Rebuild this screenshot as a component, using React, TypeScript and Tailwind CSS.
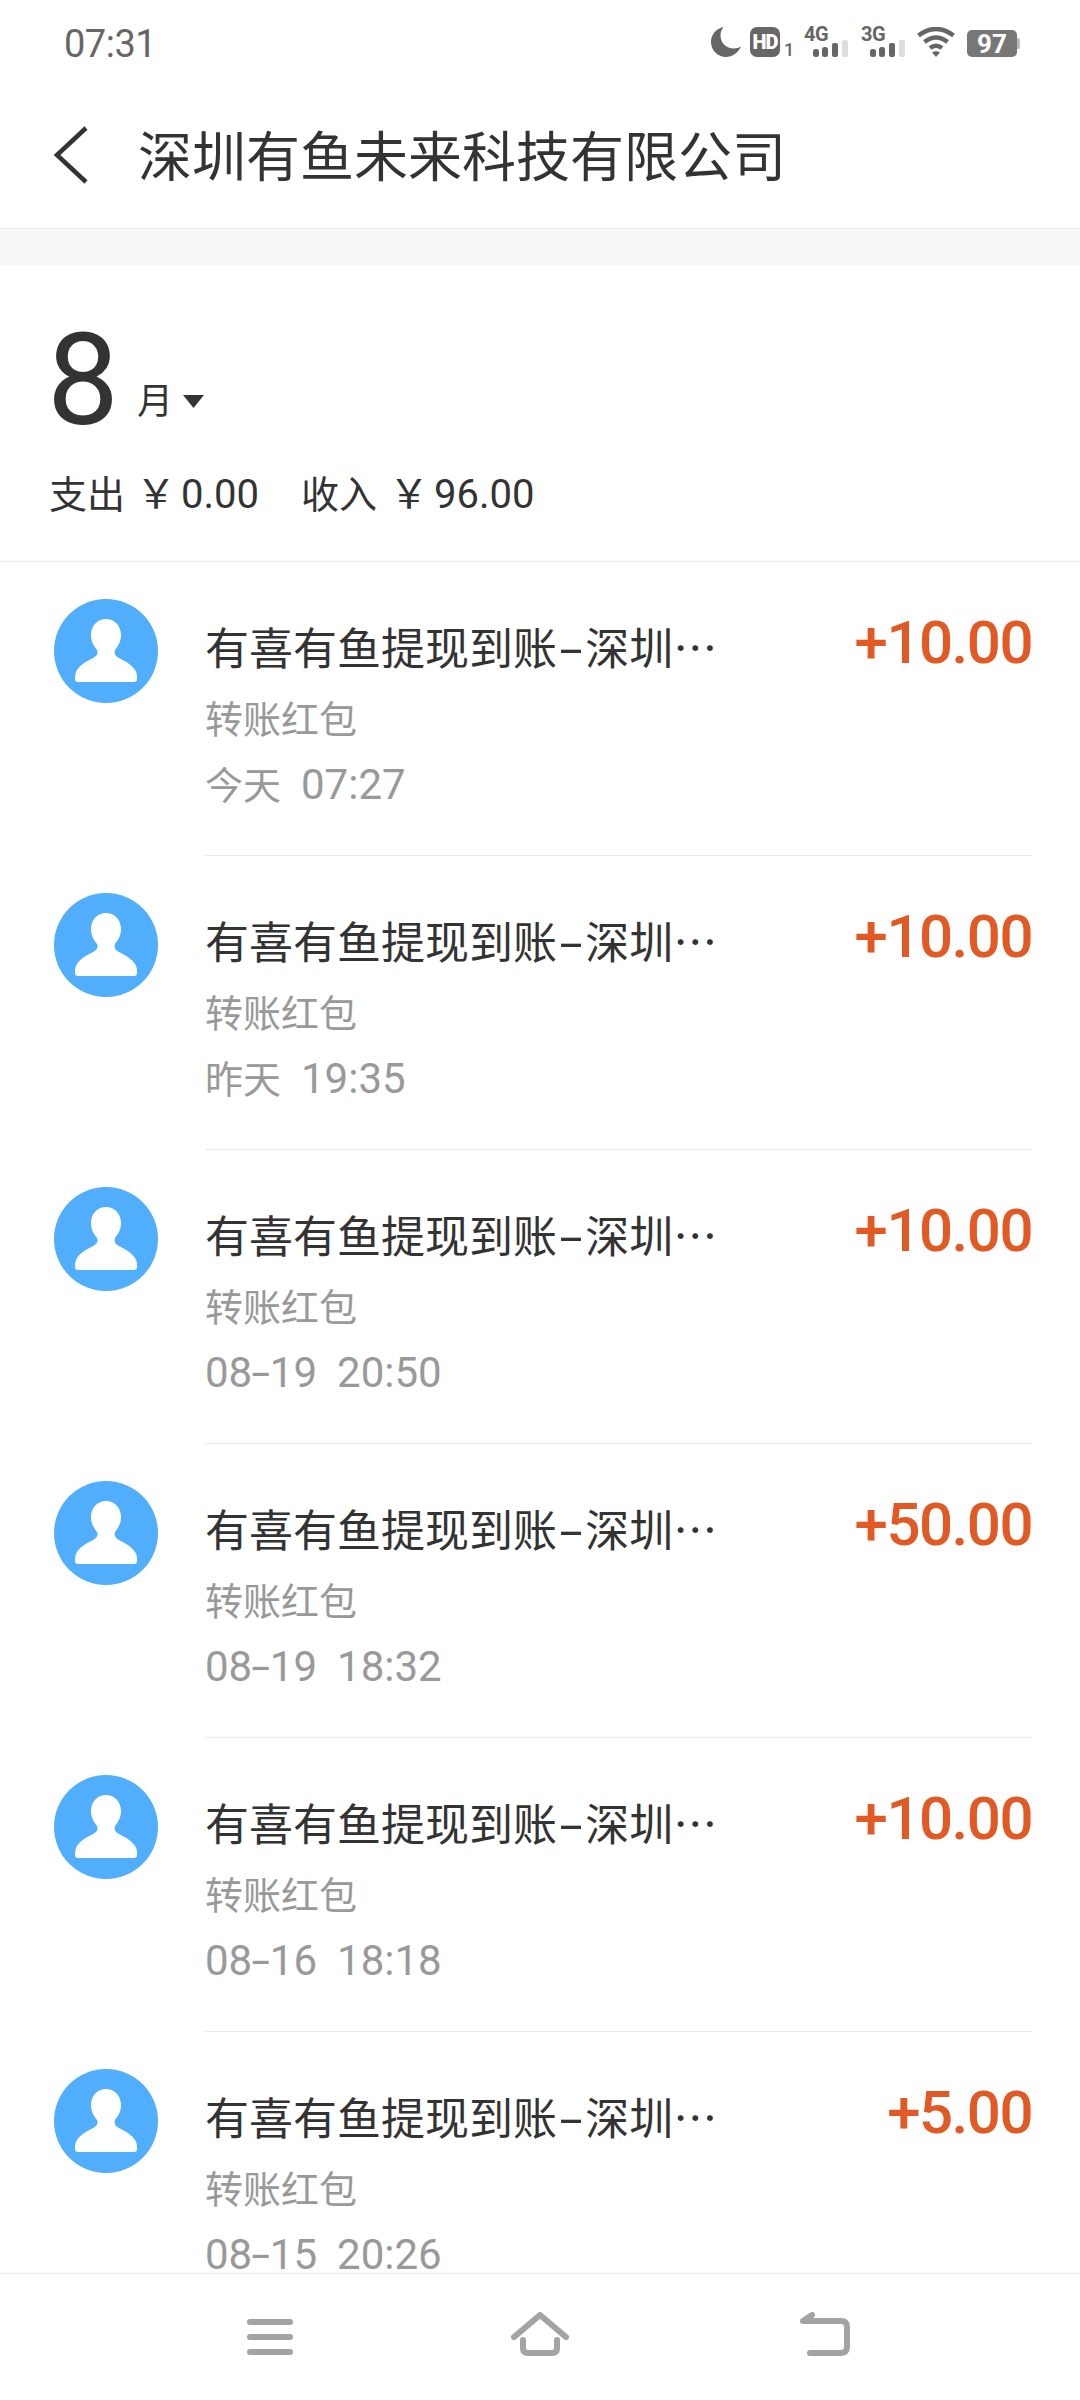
const rows = [
  { day: '今天', clock: '07:27', amount: '+10.00' },
  { day: '昨天', clock: '19:35', amount: '+10.00' },
  { day: '08-19', clock: '20:50', amount: '+10.00' },
  { day: '08-19', clock: '18:32', amount: '+50.00' },
  { day: '08-16', clock: '18:18', amount: '+10.00' },
  { day: '08-15', clock: '20:26', amount: '+5.00' },
]

const cjk = "font-['Roboto','Noto_Sans_CJK_SC',sans-serif]"

function Signal({ label }: { label: string }) {
  return (
    <div className="flex w-[44px] flex-col">
      <span className="font-['Roboto',sans-serif] text-[20px] leading-[15px] font-bold tracking-[-0.5px] text-[#666]">
        {label}
      </span>
      <svg className="-mt-[2px] ml-[9px]" width="35" height="17" viewBox="0 0 35 17">
        <rect x="0" y="9" width="6" height="8" rx="2.5" fill="#666" />
        <rect x="9" y="7" width="6" height="10" rx="2.5" fill="#666" />
        <rect x="19" y="3" width="6" height="14" rx="2" fill="#666" />
        <rect x="29" y="0" width="6" height="17" rx="2" fill="#ddd" />
      </svg>
    </div>
  )
}

function StatusIcons() {
  return (
    <div className="flex items-start">
      <svg width="30" height="30" viewBox="0 0 30 30" fill="#666">
        <path d="M12.500 0C5 1.500 0 7.800 0 15c0 8.300 6.700 15 15 15 6.600 0 12.300-4.200 15-10.500-2 1.300-4.500 2-7 2C15 21.500 9.500 15.500 9.500 8.500c0-3 1-6 3-8.500z" />
      </svg>
      <div className="ml-[9px] flex h-[30px] w-[30px] items-center justify-center rounded-[7px] bg-[#666]">
        <span className="font-['Roboto',sans-serif] text-[20px] leading-none font-black tracking-[-1px] text-white">HD</span>
      </div>
      <span className="mt-[15px] ml-[4px] w-[20px] font-['Roboto',sans-serif] text-[18px] leading-[15px] font-medium text-[#666]">1</span>
      <Signal label="4G" />
      <div className="ml-[13px]">
        <Signal label="3G" />
      </div>
      <svg className="ml-[12px]" width="38" height="30" viewBox="0 0 38 30" fill="none" stroke="#666" strokeWidth="4.500">
        <path d="M1.500 8.500Q19-4.500 36.500 8.500" />
        <path d="M7.500 15Q19 6 30.500 15" />
        <path d="M13 21Q19 16.500 25 21" />
        <path d="M15 25.500Q19 23 23 25.500L19 30Z" fill="#666" stroke="none" />
      </svg>
      <div className="mt-[3px] ml-[12px] flex items-center">
        <div className="flex h-[27px] w-[50px] items-center justify-center rounded-[5px] bg-[#777]">
          <span className="font-['Roboto',sans-serif] text-[26px] leading-none font-bold text-white">97</span>
        </div>
        <div className="h-[11px] w-[3px] rounded-r-[2px] bg-[#bbb]" />
      </div>
    </div>
  )
}

function Avatar() {
  return (
    <svg className="shrink-0" width="104" height="104" viewBox="0 0 104 104">
      <circle cx="52" cy="52" r="52" fill="#51aefc" />
      <path
        d="M52 20C43 20 37 27 37 36C37 43 40 47 43 51C44.500 54 43 57 39 59C33 62 26 66 23 71C21 74 21 77 21 80C21 82 22 83 24 83L80 83C82 83 83 82 83 80C83 76 83 74 81 71C78 66 71 62 65 59C61 57 60 54 61 51C64 47 67 43 67 36C67 27 61 20 52 20Z"
        fill="#fff"
      />
    </svg>
  )
}

// the hyphen in the reference is wider than Roboto's, so it is stretched and padded
function Day({ day }: { day: string }) {
  if (!day.includes('-')) return <span className="text-[38px]">{day}</span>
  const [m, d] = day.split('-')
  return (
    <>
      {m}
      <span className="inline-block scale-x-[1.6] px-[3px]">-</span>
      {d}
    </>
  )
}

function Row({ day, clock, amount }: { day: string; clock: string; amount: string }) {
  return (
    <div className="group flex h-[294px] shrink-0 pl-[54px] last:h-[240px]">
      <div className="pt-[37px]">
        <Avatar />
      </div>
      <div className="mr-[48px] ml-[47px] flex flex-1 justify-between border-b border-[#ececec] group-last:border-b-0">
        <div className="pt-[56px]">
          <div className="text-[44px] leading-[56px] whitespace-nowrap text-[#333]">
            <span className={cjk}>有喜有鱼提现到账</span>
            <span className={`${cjk} inline-block scale-x-[1.9] px-[8px]`}>-</span>
            <span className={cjk}>深圳</span>
            <span className="font-['Noto_Sans_CJK_SC',sans-serif]">…</span>
          </div>
          <div className={`${cjk} mt-[12px] text-[38px] leading-[60px] text-[#999]`}>转账红包</div>
          <div className={`${cjk} mt-[16px] flex gap-[20px] text-[42px] leading-[38px] whitespace-pre text-[#999]`}>
            <span>
              <Day day={day} />
            </span>
            <span>{clock}</span>
          </div>
        </div>
        <div className="pt-[45px] font-['Roboto',sans-serif] text-[60px] leading-[72px] font-medium tracking-[-1.5px] text-[#e15a26]">
          {amount}
        </div>
      </div>
    </div>
  )
}

export default function App() {
  return (
    <div className="flex h-[2400px] w-[1080px] flex-col overflow-hidden bg-white">
      <div className="flex h-[84px] shrink-0 items-start justify-between pt-[28px] pr-[60px] pl-[64px]">
        <span className="font-['Roboto',sans-serif] text-[38px] leading-[32px] tracking-[-0.5px] text-[#666]">07:31</span>
        <div className="-mt-px">
          <StatusIcons />
        </div>
      </div>
      <header className="flex h-[144px] shrink-0 items-center pl-[53px]">
        <svg className="-mt-[2px]" width="36" height="58" viewBox="0 0 36 58" fill="none" stroke="#333" strokeWidth="4.500">
          <path d="M33 2L4 29L33 56" />
        </svg>
        <h1 className={`${cjk} mt-[5px] ml-[49px] text-[54px] leading-[64px] font-normal text-[#333]`}>深圳有鱼未来科技有限公司</h1>
      </header>
      <div className="h-[37px] shrink-0 border-t border-[#ececec] bg-[#f7f7f7]" />
      <section className="h-[297px] shrink-0 border-b border-[#ececec] pl-[47px]">
        <div className="flex h-[180px] items-end">
          <span className="font-['Roboto',sans-serif] text-[128px] leading-[130px] text-[#333]">8</span>
          <span className={`${cjk} mb-[21px] ml-[18px] text-[36px] leading-[44px] text-[#333]`}>月</span>
          <svg className="mb-[37px] ml-[10px]" width="21" height="13" viewBox="0 0 21 13">
            <path d="M0 0H21L10.500 13Z" fill="#333" />
          </svg>
        </div>
        <div className={`${cjk} mt-[26px] flex items-baseline text-[38px] leading-[48px] whitespace-pre text-[#333]`}>
          <span className="ml-[2px]">支出</span>
          <span className="ml-[11px] text-[40px]">￥</span>
          <span className="ml-[5px] text-[40px]">0.00</span>
          <span className="ml-[42px]">收入</span>
          <span className="ml-[12px] text-[40px]">￥</span>
          <span className="ml-[5px] text-[40px]">96.00</span>
        </div>
      </section>
      <main className="flex min-h-0 flex-1 flex-col">
        {rows.map((r, i) => (
          <Row key={i} day={r.day} clock={r.clock} amount={r.amount} />
        ))}
      </main>
      <nav className="flex h-[127px] shrink-0 items-start border-t border-[#ececec] bg-white pt-[38px] pl-[247px]">
        <svg width="46" height="44" viewBox="0 0 46 44" fill="none" stroke="#a3a3a3" strokeWidth="6" strokeLinecap="round">
          <path d="M3 10H43M3 25H43M3 40H43" />
        </svg>
        <svg className="ml-[218px]" width="58" height="44" viewBox="0 0 58 44" fill="none" stroke="#a3a3a3" strokeWidth="6" strokeLinecap="round" strokeLinejoin="round">
          <path d="M3 25L29 3L55 25" />
          <path d="M12 28V36Q12 41 17 41H41Q46 41 46 36V28" />
        </svg>
        <svg className="ml-[231px]" width="50" height="44" viewBox="0 0 50 44" fill="none" stroke="#a3a3a3" strokeWidth="6" strokeLinecap="round" strokeLinejoin="round">
          <path d="M10 41H40Q47 41 47 35V15Q47 9 41 9H3L12 3" />
        </svg>
      </nav>
    </div>
  )
}
